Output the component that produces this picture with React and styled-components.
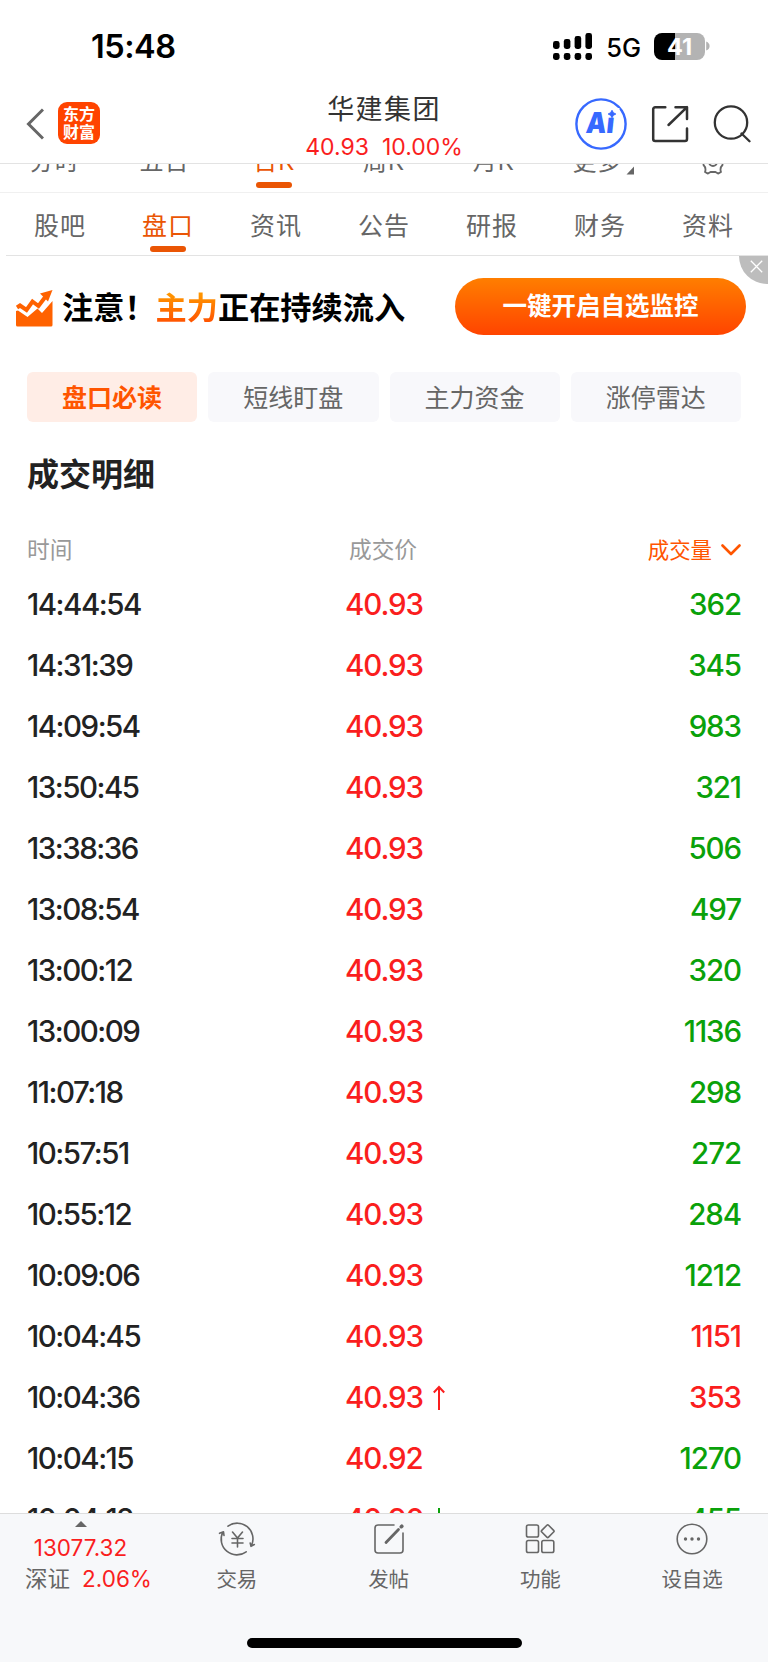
import styled, {createGlobalStyle, css} from 'styled-components'

const colors = {
  up: '#fa1e1e',
  down: '#0aa10a',
  brand: '#ea5504',
  accent: '#ff5500',
  text: '#222222',
  grey: '#666666',
  light: '#999999',
  panel: '#f7f8fa',
  line: '#e3e3e3',
}

const GlobalStyle = createGlobalStyle`
  * {
    box-sizing: border-box;
  }
  body {
    margin: 0;
    background: #ffffff;
    font-family: Inter, 'Noto Sans CJK SC', sans-serif;
    color: ${colors.text};
  }
  svg {
    display: block;
    flex: none;
  }
`

const Screen = styled.div`
  width: 768px;
  height: 1662px;
  display: flex;
  flex-direction: column;
  overflow: hidden;
  background: #ffffff;
`

const StatusBar = styled.div`
  height: 92px;
  flex: none;
  display: flex;
  align-items: center;
  justify-content: space-between;
  padding: 0 58px 0 91px;
`
const Clock = styled.div`
  margin-top: 2px;
  font-size: 32.5px;
  font-weight: 600;
  line-height: 40px;
  letter-spacing: -0.5px;
  color: #000000;
`
const StatusRight = styled.div`
  display: flex;
  align-items: center;
  color: #000000;
`
const Network = styled.div`
  font-size: 25.5px;
  font-weight: 500;
  line-height: 30px;
  margin: 3px 13px 0 14px;
`
const Battery = styled.div`
  width: 51px;
  height: 27px;
  border-radius: 8px;
  background: linear-gradient(90deg, #000000 21px, #b3b3b3 21px);
  color: #ffffff;
  font-size: 23.5px;
  font-weight: 700;
  line-height: 27px;
  text-align: center;
`

const Header = styled.header`
  height: 72px;
  flex: none;
  display: grid;
  grid-template-columns: 250px 1fr 250px;
  border-bottom: 1px solid ${colors.line};
`
const HeaderLeft = styled.div`
  display: flex;
  align-items: flex-start;
  gap: 14px;
  padding: 10px 0 0 26px;
`
const Logo = styled.div`
  width: 42px;
  height: 42px;
  border-radius: 9px;
  background: #ff4400;
  color: #ffffff;
  font-size: 16px;
  font-weight: 700;
  line-height: 18px;
  padding-top: 3px;
  text-align: center;
`
const HeaderTitle = styled.div`
  text-align: center;
`
const StockName = styled.div`
  padding-top: 1px;
  font-size: 27px;
  line-height: 34px;
  letter-spacing: 1.4px;
  color: #333333;
`
const StockQuote = styled.div`
  display: flex;
  justify-content: center;
  gap: 13px;
  font-size: 23px;
  line-height: 28px;
  margin-top: 6px;
  color: ${colors.up};
`
const HeaderRight = styled.div`
  display: flex;
  align-items: flex-start;
  justify-content: flex-end;
  padding: 6px 17px 0 0;
`
const HeaderAction = styled.div`
  margin: 7px 0 0 24px;
`

const PeriodTabs = styled.nav`
  height: 29px;
  flex: none;
  display: grid;
  grid-template-columns: repeat(7, 1fr);
  grid-template-rows: 28px;
  align-items: end;
  overflow: hidden;
  border-bottom: 1px solid #f0f0f0;
`
const SectionTabs = styled.nav`
  height: 63px;
  flex: none;
  display: grid;
  grid-template-columns: repeat(7, 1fr);
  align-items: end;
  margin-left: 6px;
  padding-right: 6px;
  border-bottom: 1px solid ${colors.line};
`
const Tab = styled.div`
  display: flex;
  flex-direction: column;
  align-items: center;
  font-size: ${({$small}) => ($small ? 24 : 25)}px;
  line-height: 30px;
  letter-spacing: 1px;
  color: ${({$active}) => ($active ? colors.brand : colors.grey)};

  &::after {
    content: '';
    width: 36px;
    height: 6px;
    border-radius: 3px;
    margin: ${({$small}) => ($small ? '5px 0 4px' : '5px 0 3px')};
    background: ${({$active}) => ($active ? colors.brand : 'transparent')};
  }
`
const TabLabel = styled.div`
  display: flex;
  align-items: flex-end;
  height: 30px;
`

const Banner = styled.div`
  position: relative;
  height: 104px;
  flex: none;
  display: flex;
  align-items: center;
  padding: 0 22px 0 15px;
`
const BannerText = styled.div`
  flex: 1;
  margin-left: 9px;
  font-size: 31.2px;
  font-weight: 700;
  line-height: 40px;
  color: #000000;
  white-space: nowrap;
`
const BannerHighlight = styled.span`
  background: linear-gradient(180deg, #ff9500 15%, #ff5500 85%);
  background-clip: text;
  color: transparent;
`
const BannerButton = styled.button`
  width: 291px;
  height: 57px;
  border: 0;
  margin-bottom: 3px;
  padding: 0 0 4px;
  border-radius: 29px;
  background: linear-gradient(180deg, #ff7e00, #ff4400);
  color: #ffffff;
  font-family: inherit;
  font-size: 24.5px;
  font-weight: 700;
`
const BannerClose = styled.div`
  position: absolute;
  top: 0;
  right: 0;
  width: 29px;
  height: 28px;
  border-bottom-left-radius: 29px;
  background: #bdbdbd;
  display: flex;
  align-items: center;
  justify-content: center;
  padding: 0 0 7px 6px;
`

const Pills = styled.div`
  flex: none;
  display: grid;
  grid-template-columns: repeat(4, 1fr);
  gap: 11px;
  padding: 12px 27px 0;
`
const Pill = styled.div`
  height: 50px;
  border-radius: 6px;
  font-size: 25px;
  line-height: 53px;
  text-align: center;
  background: #f8f8fb;
  color: ${colors.grey};
  ${({$active}) =>
    $active &&
    css`
      background: #ffede6;
      color: ${colors.accent};
      font-weight: 700;
    `}
`

const Title = styled.h2`
  flex: none;
  margin: 33px 27px 0;
  font-size: 32px;
  font-weight: 700;
  line-height: 40px;
`

const Table = styled.div`
  flex: 1;
  min-height: 0;
  overflow: hidden;
  padding: 0 27px;
`
const TableRow = styled.div`
  display: grid;
  grid-template-columns: 318px 1fr 1fr;
  align-items: center;
  height: 61px;
  font-size: 29.5px;
  font-weight: 500;
  line-height: 61px;
`
const TableHead = styled(TableRow)`
  height: 40px;
  margin: 35px 0 4px;
  font-size: 22.7px;
  font-weight: 400;
  line-height: 40px;
  color: ${colors.light};
`
const PriceHead = styled.div`
  padding-left: 4px;
`
const VolumeHead = styled.div`
  display: flex;
  align-items: center;
  justify-content: flex-end;
  gap: 9px;
  font-size: 21.4px;
  color: ${colors.accent};
`
const Time = styled.div`
  letter-spacing: -1.5px;
`
const Price = styled.div`
  display: flex;
  align-items: center;
  gap: 10px;
  letter-spacing: -1.1px;
  color: ${colors.up};
`
const Volume = styled.div`
  text-align: right;
  letter-spacing: -1.1px;
  color: ${({$up}) => ($up ? colors.up : colors.down)};
`

const BottomBar = styled.footer`
  height: 149px;
  flex: none;
  display: flex;
  flex-direction: column;
  justify-content: space-between;
  background: ${colors.panel};
  border-top: 1px solid #dddddd;
`
const BottomItems = styled.div`
  display: grid;
  grid-template-columns: 161px repeat(4, 1fr);
`
const IndexQuote = styled.div`
  display: flex;
  flex-direction: column;
  align-items: center;
  padding-top: 7px;
  font-size: 22.5px;
  line-height: 31px;
  color: ${colors.up};
`
const IndexValue = styled.div`
  margin-top: 5px;
`
const IndexName = styled.div`
  display: flex;
  gap: 12px;
  padding-left: 16px;
`
const IndexLabel = styled.span`
  color: ${colors.grey};
`
const BottomItem = styled.div`
  display: flex;
  flex-direction: column;
  align-items: center;
  padding-top: 7px;
  font-size: 20.5px;
  line-height: 30px;
  color: ${colors.grey};

  svg {
    margin-bottom: 8px;
  }
`
const HomeIndicator = styled.div`
  width: 275px;
  height: 10px;
  margin: 0 auto 14px;
  border-radius: 5px;
  background: #000000;
`

const SignalIcon = () => (
  <svg width="39" height="27" viewBox="0 0 39 27">
    {[8, 6, 3, 0].map((top, i) => (
      <g key={top}>
        <rect x={i * 10.8} y={top} width="6.6" height={16 - top} rx="2.4" />
        <rect x={i * 10.8} y="20" width="6.6" height="7" rx="2.4" />
      </g>
    ))}
  </svg>
)

const BatteryTip = () => (
  <svg width="5" height="10" viewBox="0 0 5 10">
    <path d="M1.2 0.5Q4.6 2 4.6 5T1.2 9.5Z" fill="#b3b3b3" />
  </svg>
)

const BackIcon = () => (
  <svg width="18" height="42" viewBox="0 0 18 42" fill="none" stroke="#666" strokeWidth="3">
    <path d="M17 7.5 2.5 22 17 36.5" />
  </svg>
)

const AiIcon = () => (
  <svg width="52" height="52" viewBox="0 0 52 52">
    <circle cx="26" cy="26" r="24.6" fill="none" stroke="#3769ff" strokeWidth="2.4" />
    <text
      x="14"
      y="35.5"
      fontFamily="Inter, sans-serif"
      fontSize="29"
      fontWeight="900"
      textLength="28"
      lengthAdjust="spacingAndGlyphs"
      transform="skewX(-6)"
      fill="#3769ff"
    >
      Ai
    </text>
    <path d="M31.5 10h13v9.6h-13z" fill="#fff" />
    <path
      d="M37 12.3Q37.8 15.2 40.8 16 37.8 16.8 37 19.7 36.2 16.8 33.2 16 36.2 15.2 37 12.3Z"
      fill="#3769ff"
      stroke="#3769ff"
      strokeWidth="1"
    />
  </svg>
)

const ShareIcon = () => (
  <svg
    width="38"
    height="38"
    viewBox="0 0 38 38"
    fill="none"
    stroke="#333"
    strokeWidth="2.5"
    strokeLinecap="round"
    strokeLinejoin="round"
  >
    <path d="M14.3 2.2H4.2a2 2 0 0 0-2 2V34a2 2 0 0 0 2 2H34a2 2 0 0 0 2-2V23.5" />
    <path d="M24.5 2.2H36V14M36 2.2 17.5 20" />
  </svg>
)

const SearchIcon = () => (
  <svg
    width="38"
    height="38"
    viewBox="0 0 38 38"
    fill="none"
    stroke="#333"
    strokeWidth="2.3"
    strokeLinecap="round"
  >
    <circle cx="18" cy="17.5" r="16.200" />
    <path d="M28.5 28.5 36.5 36.3" />
  </svg>
)

const CornerIcon = () => (
  <svg width="12" height="13" viewBox="0 0 12 13">
    <path d="M12 2.5V10.500H4.500Z" fill="#666" />
  </svg>
)

const GearIcon = () => (
  <svg width="24" height="30" viewBox="0 0 24 30" fill="none" stroke="#666" strokeWidth="1.8">
    <path
      d="M4 5 7 3.5 9.500 5H14.500L17 3.500 20 5Q18.500 9 21.500 12V18Q18.500 21 20 25L17 26.600 14.500 25H9.500L7 26.600 4 25Q5.500 21 2.500 18V12Q5.500 9 4 5Z"
      strokeLinejoin="round"
    />
    <circle cx="12" cy="15" r="4" />
  </svg>
)

const TrendIcon = () => (
  <svg width="38" height="38" viewBox="0 0 38 38" fill="#ff6200">
    <path d="M1 22 3 21.500 12.500 28 22.500 19.500 27 24 37.500 12V36A1.500 1.500 0 0 1 36 37.500H2.500A1.500 1.500 0 0 1 1 36Z" />
    <path
      d="M2 18.500 5 16.500 11.500 21 17.500 12.500 23.500 17 31 7"
      fill="none"
      stroke="#ff6200"
      strokeWidth="4"
    />
    <path d="M25 4.500 37.500 1 33 12.500Z" />
  </svg>
)

const CloseIcon = () => (
  <svg width="13" height="13" viewBox="0 0 13 13" stroke="#fff" strokeWidth="1.3">
    <path d="M.8.8 12.200 12.200M12.200.8.8 12.200" />
  </svg>
)

const ChevronDown = () => (
  <svg
    width="20"
    height="14"
    viewBox="0 0 20 14"
    fill="none"
    stroke={colors.accent}
    strokeWidth="2.6"
    strokeLinecap="round"
    strokeLinejoin="round"
  >
    <path d="M1.500 2.500 10 11 18.500 2.500" />
  </svg>
)

const PriceArrow = ({down}) => (
  <svg
    width="12"
    height="26"
    viewBox="0 0 12 26"
    fill="none"
    stroke={down ? colors.down : colors.up}
    strokeWidth="2"
  >
    <path d={down ? 'M6 1V24M.8 19 6 24.500 11.200 19' : 'M6 25V2M.8 7.500 6 2 11.200 7.500'} />
  </svg>
)

const UpTriangle = () => (
  <svg width="12" height="6" viewBox="0 0 12 6">
    <path d="M6 0 12 6H0Z" fill="#666" />
  </svg>
)

const bottomIcon = {
  width: 38,
  height: 36,
  viewBox: '0 0 38 36',
  fill: 'none',
  stroke: '#666',
  strokeWidth: 1.6,
  strokeLinecap: 'round',
  strokeLinejoin: 'round',
}

const TradeIcon = () => (
  <svg {...bottomIcon}>
    <path d="M10 5.200A15.700 15.700 0 0 1 33.500 24.500M36.300 23.500 33 25.300 32.200 22" />
    <path d="M28.200 30.800A15.700 15.700 0 0 1 4.800 11.200M1.500 12.300 5.500 10.800 6 14.500" />
    <path d="M14.500 11 19.500 17 24.500 11M19.500 17V26M14 17.500H25M14 22H25" />
  </svg>
)

const PostIcon = () => (
  <svg {...bottomIcon}>
    <path d="M24 4H8a3 3 0 0 0-3 3V29a3 3 0 0 0 3 3H30a3 3 0 0 0 3-3V12" />
    <path d="M16 21.500 28.500 8.500" strokeWidth="2.800" />
    <path d="M31.300 5.700 31.800 5.200" strokeWidth="3.600" />
  </svg>
)

const GridIcon = () => (
  <svg {...bottomIcon}>
    <rect x="5.500" y="4" width="12" height="12" rx="1.800" />
    <rect x="5.500" y="19.500" width="12" height="12" rx="1.800" />
    <rect x="20.800" y="19.500" width="12" height="12" rx="1.800" />
    <rect x="21.900" y="5.400" width="9.600" height="9.600" rx="1.200" transform="rotate(45 26.700 10.200)" />
  </svg>
)

const MoreIcon = () => (
  <svg {...bottomIcon}>
    <circle cx="19" cy="18" r="14.800" />
    <g fill="#666" stroke="none">
      <circle cx="12.500" cy="18" r="1.700" />
      <circle cx="19" cy="18" r="1.700" />
      <circle cx="25.500" cy="18" r="1.700" />
    </g>
  </svg>
)

const periods = ['分时', '五日', '日K', '周K', '月K']
const sections = ['股吧', '盘口', '资讯', '公告', '研报', '财务', '资料']
const pills = ['盘口必读', '短线盯盘', '主力资金', '涨停雷达']

const trades = [
  {time: '14:44:54', price: '40.93', volume: 362},
  {time: '14:31:39', price: '40.93', volume: 345},
  {time: '14:09:54', price: '40.93', volume: 983},
  {time: '13:50:45', price: '40.93', volume: 321},
  {time: '13:38:36', price: '40.93', volume: 506},
  {time: '13:08:54', price: '40.93', volume: 497},
  {time: '13:00:12', price: '40.93', volume: 320},
  {time: '13:00:09', price: '40.93', volume: 1136},
  {time: '11:07:18', price: '40.93', volume: 298},
  {time: '10:57:51', price: '40.93', volume: 272},
  {time: '10:55:12', price: '40.93', volume: 284},
  {time: '10:09:06', price: '40.93', volume: 1212},
  {time: '10:04:45', price: '40.93', volume: 1151, up: true},
  {time: '10:04:36', price: '40.93', volume: 353, up: true, move: 'up'},
  {time: '10:04:15', price: '40.92', volume: 1270},
  {time: '10:04:12', price: '40.90', volume: 455, move: 'down'},
]

const bottomItems = [
  {label: '交易', Icon: TradeIcon},
  {label: '发帖', Icon: PostIcon},
  {label: '功能', Icon: GridIcon},
  {label: '设自选', Icon: MoreIcon},
]

const App = () => {
  return (
    <Screen>
      <GlobalStyle />
      <StatusBar>
        <Clock>15:48</Clock>
        <StatusRight>
          <SignalIcon />
          <Network>5G</Network>
          <Battery>41</Battery>
          <BatteryTip />
        </StatusRight>
      </StatusBar>

      <Header>
        <HeaderLeft>
          <BackIcon />
          <Logo>
            东方
            <br />
            财富
          </Logo>
        </HeaderLeft>
        <HeaderTitle>
          <StockName>华建集团</StockName>
          <StockQuote>
            <span>40.93</span>
            <span>10.00%</span>
          </StockQuote>
        </HeaderTitle>
        <HeaderRight>
          <AiIcon />
          <HeaderAction>
            <ShareIcon />
          </HeaderAction>
          <HeaderAction>
            <SearchIcon />
          </HeaderAction>
        </HeaderRight>
      </Header>

      <PeriodTabs>
        {periods.map(label => (
          <Tab key={label} $small $active={label === '日K'}>
            <TabLabel>{label}</TabLabel>
          </Tab>
        ))}
        <Tab $small>
          <TabLabel>
            更多
            <CornerIcon />
          </TabLabel>
        </Tab>
        <Tab $small>
          <TabLabel>
            <GearIcon />
          </TabLabel>
        </Tab>
      </PeriodTabs>

      <SectionTabs>
        {sections.map(label => (
          <Tab key={label} $active={label === '盘口'}>
            <TabLabel>{label}</TabLabel>
          </Tab>
        ))}
      </SectionTabs>

      <Banner>
        <TrendIcon />
        <BannerText>
          注意！<BannerHighlight>主力</BannerHighlight>正在持续流入
        </BannerText>
        <BannerButton>一键开启自选监控</BannerButton>
        <BannerClose>
          <CloseIcon />
        </BannerClose>
      </Banner>

      <Pills>
        {pills.map((label, i) => (
          <Pill key={label} $active={i === 0}>
            {label}
          </Pill>
        ))}
      </Pills>

      <Title>成交明细</Title>

      <Table>
        <TableHead>
          <div>时间</div>
          <PriceHead>成交价</PriceHead>
          <VolumeHead>
            成交量
            <ChevronDown />
          </VolumeHead>
        </TableHead>
        {trades.map(({time, price, volume, up, move}) => (
          <TableRow key={time}>
            <Time>{time}</Time>
            <Price>
              {price}
              {move && <PriceArrow down={move === 'down'} />}
            </Price>
            <Volume $up={up}>{volume}</Volume>
          </TableRow>
        ))}
      </Table>

      <BottomBar>
        <BottomItems>
          <IndexQuote>
            <UpTriangle />
            <IndexValue>13077.32</IndexValue>
            <IndexName>
              <IndexLabel>深证</IndexLabel>
              <span>2.06%</span>
            </IndexName>
          </IndexQuote>
          {bottomItems.map(({label, Icon}) => (
            <BottomItem key={label}>
              <Icon />
              {label}
            </BottomItem>
          ))}
        </BottomItems>
        <HomeIndicator />
      </BottomBar>
    </Screen>
  )
}

export default App
